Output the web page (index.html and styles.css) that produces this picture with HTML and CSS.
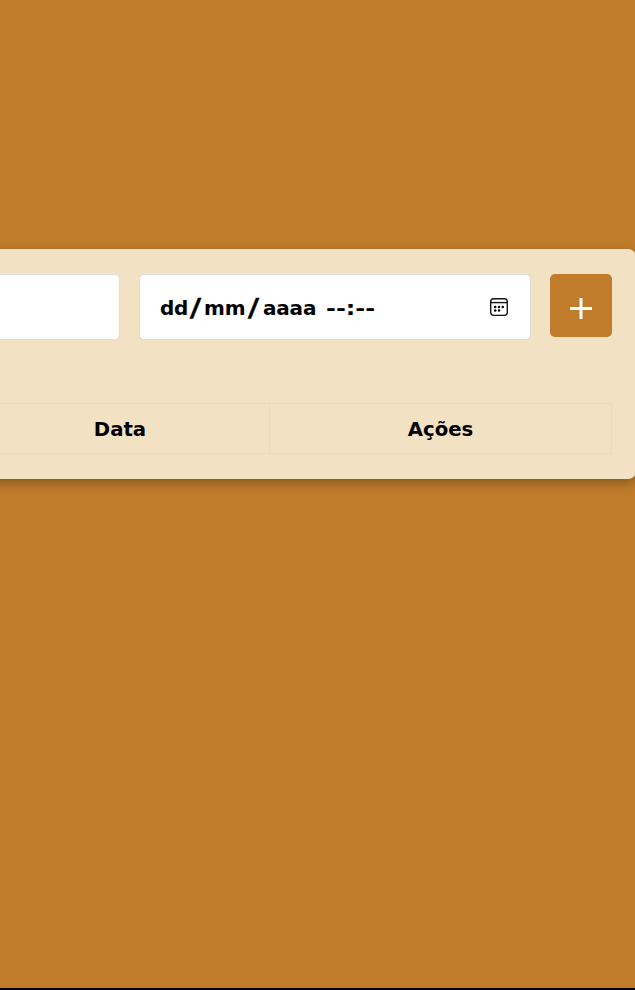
FILE: index.html
```html
<!DOCTYPE html>
<html lang="pt-BR">
<head>
<meta charset="utf-8">
<title>Tarefas</title>
<link rel="stylesheet" href="styles.css">
</head>
<body>
<main class="card">
  <form class="task-form">
    <div class="field"></div>
    <div class="field date-field">
      <div class="date-text"><span class="day">dd</span><span class="slash">/</span><span class="month">mm</span><span class="slash slash-last">/</span><span class="year">aaaa</span><span class="time">--:--</span></div>
      <svg class="calendar" viewBox="0 0 20 20" fill="none" stroke="#111" stroke-width="1.35"><rect x="1.7" y="1.7" width="16.6" height="16.6" rx="3"/><path d="M2 5.6h16"/><g fill="#000" stroke="none"><circle cx="6.2" cy="10" r="1.25"/><circle cx="10" cy="10" r="1.25"/><circle cx="13.8" cy="10" r="1.25"/><circle cx="6.2" cy="13.6" r="1.25"/><circle cx="10" cy="13.6" r="1.25"/></g></svg>
    </div>
    <button class="add" type="button" aria-label="Adicionar"><svg viewBox="0 0 22 22"><path d="M0 10.5h22M11 0v21"/></svg></button>
  </form>
  <table class="tasks">
    <thead><tr><th class="col-task"></th><th class="col-date">Data</th><th class="col-actions">Ações</th></tr></thead>
  </table>
</main>
<div class="edge"></div>
</body>
</html>
```
FILE: styles.css
```css
* { box-sizing: border-box; }
body {
  margin: 0;
  height: 990px;
  overflow: hidden;
  display: flex;
  flex-direction: column;
  background: #c07c2a;
  font-family: Verdana, "DejaVu Sans", sans-serif;
  font-size: 20px;
  color: #000;
}
.card {
  width: 1036px;
  height: 230px;
  flex: none;
  margin: 249px 0 0 -400px;
  padding: 25px 24px;
  border-radius: 8px;
  background: #f2e1c3;
  box-shadow: 0 4px 12px rgba(0, 0, 0, 0.3);
}
.task-form {
  display: flex;
  gap: 19px;
  height: 66px;
}
.field {
  flex: 1;
  height: 66px;
  background: #fff;
  border: 1px solid #ddd;
  border-radius: 5px;
}
.date-field {
  flex: 0 0 392px;
  display: flex;
  align-items: center;
  justify-content: space-between;
  padding: 0 21px 0 20px;
}
.date-text {
  display: flex;
  padding-top: 1px;
  font-weight: 700;
  line-height: 24px;
  letter-spacing: -0.2px;
}
.day { width: 30px; }
.slash {
  width: 14px;
  font-size: 24px;
  font-weight: 400;
  -webkit-text-stroke: 0.6px #000;
  transform: scaleX(1.35);
  transform-origin: 0 50%;
}
.month { width: 44px; }
.slash-last { width: 15px; }
.year { width: 62.5px; }
.time {
  letter-spacing: 0;
  transform: scaleX(1.19);
  transform-origin: 0 50%;
}
.calendar { width: 20px; height: 20px; margin-top: -1px; }
.add {
  width: 62px;
  height: 63px;
  padding: 0;
  border: 0;
  border-radius: 5px;
  background: #c07c2a;
  display: grid;
  place-items: center;
}
.add svg {
  width: 22px;
  height: 22px;
  margin-top: 6px;
  stroke: #fff;
  stroke-width: 3;
}
.tasks {
  width: 988px;
  height: 51px;
  margin-top: 63px;
  table-layout: fixed;
  border-collapse: collapse;
}
.tasks th {
  padding: 2px 0 0;
  border: 1px solid #ddd;
  font-size: 19.7px;
  line-height: 24px;
  text-align: center;
}
.tasks .col-date { width: 300px; padding-left: 1px; }
.col-actions { width: 342px; }
.edge {
  height: 2px;
  margin-top: auto;
  background: #000;
}
```
